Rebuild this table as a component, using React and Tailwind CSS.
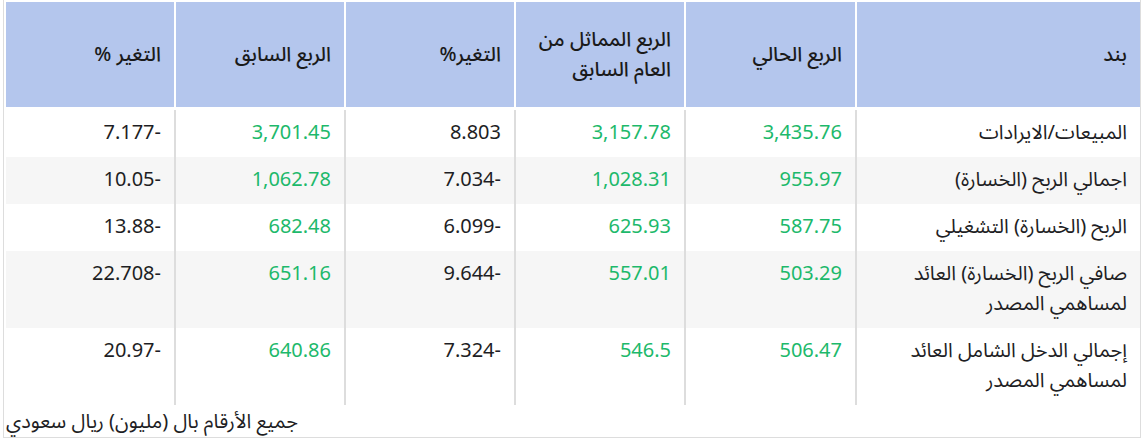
import React from "react";

const rows = [
  ["المبيعات/الايرادات", "3,435.76", "3,157.78", "8.803", "3,701.45", "7.177-"],
  ["اجمالي الربح (الخسارة)", "955.97", "1,028.31", "7.034-", "1,062.78", "10.05-"],
  ["الربح (الخسارة) التشغيلي", "587.75", "625.93", "6.099-", "682.48", "13.88-"],
  [["صافي الربح (الخسارة) العائد", "لمساهمي المصدر"], "503.29", "557.01", "9.644-", "651.16", "22.708-"],
  [["إجمالي الدخل الشامل العائد", "لمساهمي المصدر"], "506.47", "546.5", "7.324-", "640.86", "20.97-"],
];

const headers = [
  ["بند"],
  ["الربع الحالي"],
  ["الربع المماثل من", "العام السابق"],
  ["التغير%"],
  ["الربع السابق"],
  ["التغير %"],
];

const font = { fontFamily: '"Noto Sans Arabic", "Noto Sans", "DejaVu Sans", sans-serif' };

export default function App() {
  return (
    <div className="bg-white w-[1143px] h-[442px]" style={font}>
      <div className="ml-[3px] w-[1138px] border-x border-b border-[#dddddd] pl-[2px] pt-[2px]">
        <div dir="rtl" className="grid grid-cols-[283px_169px_168px_168px_168px_168px] gap-x-[2px] bg-white">
          {headers.map((h, i) => (
            <div
              key={i}
              className="h-[105px] bg-[#b4c6ed] flex items-center pr-[13px] text-[20px] leading-[30px] font-medium text-[#1a1a1a]"
            >
              <div>
                {h.map((l, j) => (
                  <div key={j}>{l}</div>
                ))}
              </div>
            </div>
          ))}
        </div>
        <div dir="rtl" className="mt-[3px] flex flex-col">
          {rows.map((r, i) => (
            <div
              key={i}
              className="grid grid-cols-[283px_169px_168px_168px_168px_168px] gap-x-[2px] bg-[#dddddd]"
            >
              {r.map((c, j) => (
                <div
                  key={j}
                  className={`pt-[8px] pb-[9px] pr-[13px] text-[20px] leading-[30px] ${
                    i % 2 === 1 ? "bg-[#f6f6f6]" : "bg-white"
                  } ${j === 1 || j === 2 || j === 4 ? "text-[#1db96b]" : "text-[#1e1e24]"}`}
                >
                  {j === 0 ? (
                    Array.isArray(c) ? (
                      c.map((l, k) => <div key={k}>{l}</div>)
                    ) : (
                      c
                    )
                  ) : (
                    <span dir="ltr">{c}</span>
                  )}
                </div>
              ))}
            </div>
          ))}
        </div>
        <div className="text-left text-[20px] leading-[30px] text-[#1e1e24] pt-[2px]" dir="ltr">
          <span dir="rtl">جميع الأرقام بال (مليون) ريال سعودي</span>
        </div>
      </div>
    </div>
  );
}
